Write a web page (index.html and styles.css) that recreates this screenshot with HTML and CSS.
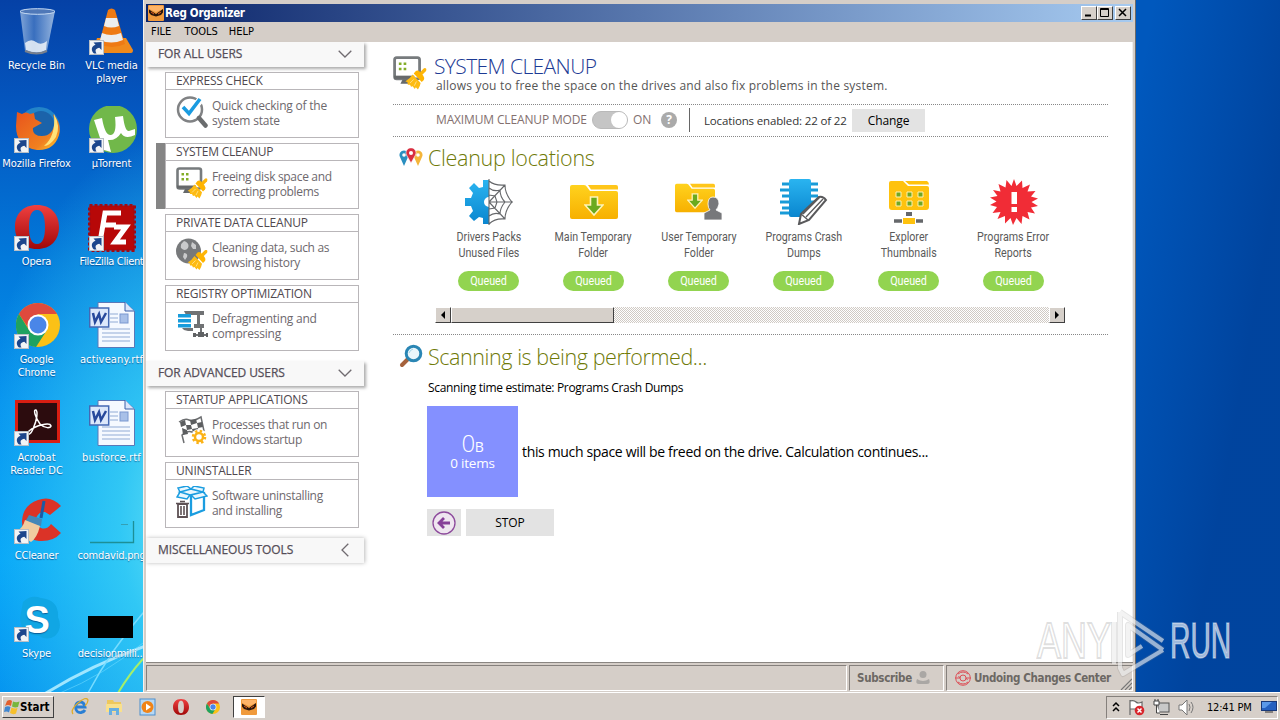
FILE: index.html
```html
<!DOCTYPE html>
<html lang="en">
<head>
<meta charset="utf-8">
<title>Reg Organizer</title>
<link rel="stylesheet" href="styles.css">
</head>
<body>
<svg width="0" height="0" class="defs">
  <defs>
    <linearGradient id="gBlue" x1="0" y1="0" x2="0" y2="1"><stop offset="0" stop-color="#2ab4f0"/><stop offset="1" stop-color="#0a86cf"/></linearGradient>
    <linearGradient id="gFold" x1="0" y1="0" x2="0" y2="1"><stop offset="0" stop-color="#ffd21e"/><stop offset="1" stop-color="#f7b000"/></linearGradient>
    <linearGradient id="gRed" x1="0" y1="0" x2="0" y2="1"><stop offset="0" stop-color="#f04040"/><stop offset="1" stop-color="#a00808"/></linearGradient>
    <linearGradient id="gGlass" x1="0" y1="0" x2="1" y2="0"><stop offset="0" stop-color="#a9c4e6"/><stop offset=".4" stop-color="#4a7cc4"/><stop offset="1" stop-color="#c4d8ee"/></linearGradient>
    <linearGradient id="gFox" x1="0" y1="0" x2="1" y2="1"><stop offset="0" stop-color="#e8541c"/><stop offset=".7" stop-color="#f08020"/><stop offset="1" stop-color="#ffd030"/></linearGradient>
    <symbol id="arrow" viewBox="0 0 15 15"><rect x=".5" y=".5" width="14" height="14" fill="#f2f4f6" stroke="#b9bfc6"/><path d="M5 13.500C2 11 1.800 6.500 6.500 4.800L4.500 2.500 12.500 2V10L10.300 7.800C7 8.500 5.500 10 7.500 13.500Z" fill="#1c468c"/></symbol>
    <symbol id="broom" viewBox="0 0 20 20"><path d="M14 6L18.500 1.500" stroke="#fdb50a" stroke-width="3.200" stroke-linecap="round"/><path d="M10 2.500Q12 1.500 13.500 3L17 7Q18.500 9 17.500 11L15.500 13 8 5Z" fill="#ffb400"/><path d="M7 6L14.500 13.800Q14 17 12 20L10 18 9 19.500 7 17 5.500 17.500 4.500 15.500 2.500 15.500 2 13 0 12.500Q4.500 10 7 6Z" fill="#fdbb13"/><path d="M10.500 12.500L8.500 16.500M8 10.500L4.500 14" stroke="#ffe9a8" stroke-width=".7"/></symbol>
    <symbol id="monitor" viewBox="0 0 32 32"><rect x="1.500" y="1.500" width="23.500" height="20" rx="2" fill="#fff" stroke="#777b7d" stroke-width="2.600"/><path d="M9 22H18L20 26H7Z" fill="#66696b"/><path d="M1 20H20" stroke="#66696b" stroke-width="3"/><path d="M5.500 6H8V8.500H5.500ZM10 6H12.500V8.500H10ZM5.500 11H8V13.500H5.500ZM10 11H12.500V13.500H10Z" fill="#83ad28"/><use href="#broom" x="11.500" y="11" width="20" height="21"/></symbol>
    <symbol id="chev" viewBox="0 0 14 8"><path d="M.7.7L7 7 13.300.7" fill="none" stroke="#706b70" stroke-width="1.300"/></symbol>
    <symbol id="chrome" viewBox="0 0 44 44"><circle cx="22" cy="22" r="22" fill="#fbc116"/><path d="M2.900 11A22 22 0 0 1 41 11L22 11 13 26Z" fill="#de4a3d"/><path d="M2.900 11A22 22 0 0 0 20 44L31 27 13 27Z" fill="#1ea261"/><circle cx="22" cy="22" r="10.500" fill="#fff"/><circle cx="22" cy="22" r="8.500" fill="#4a86e8"/></symbol>
    <symbol id="opera" viewBox="0 0 44 44"><path fill-rule="evenodd" d="M22 0C36 0 44 9 44 22S36 44 22 44 0 35 0 22 8 0 22 0ZM22 5C16 5 14 12 14 22S16 39 22 39 30 32 30 22 28 5 22 5Z" fill="url(#gRed)"/></symbol>
    <symbol id="word" viewBox="0 0 46 46"><path d="M9 .5H36L45.500 9V45.500H9Z" fill="#f5f9ff" stroke="#5a78b8"/><path d="M36 0V9H45" fill="#dbe6fa" stroke="#3b5ea8"/><path d="M21 12H29M21 16H29M21 20H29M13 27H41M13 31H41M13 35H41M13 39H41" stroke="#92abd6" stroke-width="1.200"/><rect x="31" y="12" width="8" height="9" fill="#a8c0e8" stroke="#7a98d0"/><rect x=".7" y="6" width="19" height="19" fill="#dce8fb" stroke="#4468b4" stroke-width="1.500"/><path d="M4 11L6 20 10 12 12 20 17 11" fill="none" stroke="#27499c" stroke-width="2.500"/></symbol>
    <symbol id="reg" viewBox="0 0 16 16"><rect width="16" height="16" rx="1" fill="#f09a3c"/><path d="M1 1H15V4L8 7 1 4Z" fill="#ffb468"/><path d="M1 4.500L8 9 15 4V7.500L13 10 8 11.500 3 10 1 7.500Z" fill="#2a160c"/><path d="M3 7L6 9M10 9L13 7" stroke="#e25a1c"/></symbol>
    <symbol id="folder" viewBox="0 0 48 36"><path d="M2 1H14Q16 1 17 3L20 7H46Q48 7 48 9V33Q48 35 46 35H2Q0 35 0 33V3Q0 1 2 1Z" fill="url(#gFold)"/><path d="M18 1H46Q48 1 48 3V5.500H21Z" fill="#ffc61a"/></symbol>
    <symbol id="down" viewBox="0 0 20 20"><path d="M6.500 1H13.500V9H19L10 19 1 9H6.500Z" fill="#6aaa1e" stroke="#fff3b8" stroke-width="1.600"/></symbol>
  </defs>
</svg>
<div class="desktop">
  <svg class="beams" viewBox="0 0 143 120" width="143" height="120">
    <g fill="none" stroke-linecap="round"><path d="M46 120Q92 92 143 74" stroke="#9fe6ff" stroke-width="3"/><path d="M88 120Q112 75 143 40" stroke="#77dcff" stroke-width="1.500"/><path d="M118 120Q130 100 143 86" stroke="#a4ef6a" stroke-width="2"/><path d="M60 120Q104 102 143 70" stroke="#6ddaff" stroke-width="1" opacity=".6"/></g>
  </svg>
  <div class="icons">
    <div class="dicon"><svg width="48" height="48" viewBox="0 0 48 48"><path d="M7 3L12 43Q25 48 34 43L42 3Z" fill="url(#gGlass)" opacity=".75"/><ellipse cx="24.500" cy="3.500" rx="17.500" ry="2.800" fill="#4f78b8" stroke="#c8dcf4"/><path d="M12 35Q18 30 23 34T34 33L33 42Q24 47 13 42Z" fill="#eef3f8" opacity=".85"/><path d="M12 43Q24 48 34 43" stroke="#777f8c" stroke-width="2" fill="none"/></svg><span class="n0">Recycle Bin</span></div>
    <div class="dicon"><svg width="48" height="48" viewBox="0 0 48 48"><path d="M9 30H38L45 42Q45 45 43 45H7Q5 45 5 43Z" fill="#f08a1c"/><path d="M20 2Q23.500-1 27 2L37 36Q24 42 11 36Z" fill="#ee7a14"/><path d="M18 10H29L31 18Q23 21 16 18ZM14 25Q23 29 33 25L35 32Q23 37 12 32Z" fill="#eceef0"/><use href="#arrow" x="1" y="32" width="15" height="15"/></svg><span class="n1">VLC media<br>player</span></div>
    <div class="dicon"><svg width="48" height="48" viewBox="0 0 48 48"><circle cx="26" cy="22" r="21" fill="#2384c8"/><circle cx="28" cy="18" r="13" fill="#1b63aa"/><path d="M4 6L9 8Q13 5 17 8L21 7 22 13 29 17 20 22Q19 30 29 30 40 30 42 16L40 8Q49 18 46 29 41 45 24 44 3 41 3 20Z" fill="url(#gFox)"/><path d="M41 8Q48 20 43 31 37 40 31 40 43 30 41 8Z" fill="#ffe37a"/><use href="#arrow" x="1" y="32" width="15" height="15"/></svg><span class="n1">Mozilla Firefox</span></div>
    <div class="dicon"><svg width="50" height="48" viewBox="0 0 50 48"><circle cx="26" cy="23" r="24" fill="#71b84a"/><path d="M7 14L15 12Q18 30 24 29 30 28 28 11L36 10Q38 26 42 25L48 23V29Q38 34 34 27 29 35 21 34L24 46 17 44Z" fill="#fff"/><use href="#arrow" x="2" y="32" width="15" height="15"/></svg><span class="n1">µTorrent</span></div>
    <div class="dicon"><svg width="48" height="48" viewBox="0 0 48 48"><use href="#opera" x="2" y="0" width="44" height="46"/><use href="#arrow" x="1" y="32" width="15" height="15"/></svg><span>Opera</span></div>
    <div class="dicon"><svg width="48" height="48" viewBox="0 0 48 48"><rect x="1.500" y="1.500" width="45" height="45" fill="#b70808" stroke="#a30a12" stroke-width="3" stroke-dasharray="3 2"/><path d="M12 38L17 9H33M15 21H28M26 23H38L27 38H38" fill="none" stroke="#fff" stroke-width="5"/><use href="#arrow" x="1" y="32" width="15" height="15"/></svg><span class="n2">FileZilla Client</span></div>
    <div class="dicon"><svg width="48" height="48" viewBox="0 0 48 48"><use href="#chrome" x="3" y="1" width="44" height="44"/><use href="#arrow" x="1" y="32" width="15" height="15"/></svg><span>Google<br>Chrome</span></div>
    <div class="dicon"><svg width="48" height="48" viewBox="0 0 48 48"><use href="#word" x="1" y="0" width="46" height="46"/></svg><span class="wide">activeany.rtf</span></div>
    <div class="dicon"><svg width="48" height="48" viewBox="0 0 48 48"><rect x="3.500" y="1.500" width="42" height="40" fill="#2c0c0e" stroke="#d81e12" stroke-width="3"/><path d="M23 10C20 9 22 17 27 24 32 29 38 28 38 26 37 22 23 25 16 31 12 36 17 36 20 29 24 20 25 12 23 10Z" fill="none" stroke="#fff" stroke-width="1.500"/><use href="#arrow" x="1" y="31" width="15" height="15"/></svg><span class="n0">Acrobat<br>Reader DC</span></div>
    <div class="dicon"><svg width="48" height="48" viewBox="0 0 48 48"><use href="#word" x="1" y="0" width="46" height="46"/></svg><span class="wide">busforce.rtf</span></div>
    <div class="dicon"><svg width="48" height="48" viewBox="0 0 48 48"><path d="M48 8Q38-3 25 2 10 7 9 23 9 41 26 43 40 44 48 35L38 26Q34 32 28 30 22 27 23 20 26 13 32 14L37 17Z" fill="#db3327"/><path d="M31 3L28 20" stroke="#1c5aa4" stroke-width="3"/><path d="M16 17L29 21 28 28 12 24Z" fill="#4488b8"/><path d="M12 22L27 28Q24 40 18 44L3 34Q10 30 12 22Z" fill="#f0cda0"/><use href="#arrow" x="1" y="31" width="15" height="15"/></svg><span>CCleaner</span></div>
    <div class="dicon"><svg width="48" height="48" viewBox="0 0 48 48"><path d="M2 44.500H45.500V23" fill="none" stroke="#1d8f96" stroke-width="1.300"/><path d="M33 26.500H40" stroke="#35a0b4"/></svg><span>comdavid.png</span></div>
    <div class="dicon"><svg width="48" height="48" viewBox="0 0 48 48"><path d="M10 6Q18-2 28 2 46 4 45 21 50 32 42 40 34 45 26 40 8 39 7 22Z" fill="#10a6e4"/><text x="24" y="37" class="skype">S</text><use href="#arrow" x="1" y="31" width="15" height="15"/></svg><span>Skype</span></div>
    <div class="dicon"><svg width="48" height="48" viewBox="0 0 48 48"><rect x="0" y="20" width="45" height="22"/></svg><span>decisionmilli...</span></div>
  </div>

  <section class="window">
    <header class="titlebar"><svg width="16" height="16"><use href="#reg"/></svg><b>Reg Organizer</b>
      <div class="winbtns"><i><svg width="14" height="12"><path d="M3 8.500H9" stroke="#000" stroke-width="2"/></svg></i><i><svg width="14" height="12"><path d="M2.500 1.500H10.500V9.500H2.500ZM2.500 2.500H10.500" fill="none" stroke="#000"/></svg></i><i class="cls"><svg width="14" height="12"><path d="M3 2L10 9M10 2L3 9" stroke="#000" stroke-width="1.500"/></svg></i></div>
    </header>
    <nav class="menu"><span>FILE</span><span>TOOLS</span><span>HELP</span></nav>
    <div class="body">
      <aside class="side">
        <h3>FOR ALL USERS<svg width="14" height="8"><use href="#chev"/></svg></h3>
        <div class="cards">
          <article><h4>EXPRESS CHECK</h4><div><svg width="32" height="32" viewBox="0 0 32 32"><circle cx="14" cy="13.500" r="12" fill="#fff" stroke="#808284" stroke-width="2.500"/><path d="M23 22L29.500 29.500" stroke="#6a6c6e" stroke-width="4.500" stroke-linecap="round"/><path d="M7 12L13 18 25 3" fill="none" stroke="#fff" stroke-width="7"/><path d="M7 11L13 17.500 24 3" fill="none" stroke="#1a9be0" stroke-width="3.600"/></svg><p class="p1">Quick checking of the<br>system state</p></div></article>
          <article class="on"><h4>SYSTEM CLEANUP</h4><div><svg width="32" height="32"><use href="#monitor"/></svg><p>Freeing disk space and<br>correcting problems</p></div></article>
          <article><h4>PRIVATE DATA CLEANUP</h4><div><svg width="32" height="32" viewBox="0 0 32 32"><circle cx="12.500" cy="13" r="12.500" fill="#77797b"/><path d="M8 3Q14 5 12 10 9 14 5 10 4 6 8 3ZM16 4L20 7 20 11 17 11 15 8ZM8 15Q12 15 11 19L9 22 7 19Z" fill="#c9cacb"/><use href="#broom" x="11.500" y="12" width="20" height="20"/></svg><p>Cleaning data, such as<br>browsing history</p></div></article>
          <article><h4>REGISTRY OPTIMIZATION</h4><div><svg width="32" height="32" viewBox="0 0 32 32"><path d="M8 2H28V6H24V15H28V19H18V15H21V6H10ZM6 19H17V22H12L8 21Z" fill="#707274"/><path d="M2 5H15V8.500H2ZM2 10H15V13.500H2ZM2 15H15V18.500H2Z" fill="#189cdc"/><path d="M18 26H30M25 19V25" stroke="#707274" stroke-width="2"/><path d="M22 23H28V28H22ZM17 24H20V28H17ZM30 24H32V28H30Z" fill="#606264"/></svg><p class="p1">Defragmenting and<br>compressing</p></div></article>
        </div>
        <h3 class="adv">FOR ADVANCED USERS<svg width="14" height="8"><use href="#chev"/></svg></h3>
        <div class="cards">
          <article><h4>STARTUP APPLICATIONS</h4><div><svg width="32" height="32" viewBox="0 0 32 32"><path d="M3 7Q9 3 13 5T25 2L28 16Q20 19 16 17T6 20L8 28" fill="#fff" stroke="#6c6e70" stroke-width="1.500"/><path d="M4 7L9 5 10 10 5 12ZM14 5L20 4 21 8 15 10ZM10 10L15 10 16 14 11 15ZM21 8L26 7 27 12 22 13ZM6 13L11 15 12 19 7 20ZM16 14L22 13 23 17 17 18Z" fill="#5c5e60"/><circle cx="23" cy="22" r="8" fill="#fff"/><circle cx="23" cy="22" r="4" fill="#fff" stroke="#fbb216" stroke-width="2.500"/><circle cx="23" cy="22" r="6" fill="none" stroke="#fbb216" stroke-width="2.500" stroke-dasharray="2.356 2.356"/></svg><p>Processes that run on<br>Windows startup</p></div></article>
          <article><h4>UNINSTALLER</h4><div><svg width="32" height="32" viewBox="0 0 32 32"><path d="M4 6L14 9 28 7V24L15 29V10" fill="none" stroke="#1b9de0" stroke-width="2.300"/><path d="M4 6L14 9 27 6 15 3ZM4 6L1 11 11 13 14 9ZM27 6L31 10 19 13 15 9ZM4 6L2 2 11 0 15 3ZM27 6L28 2 18 0 15 3Z" fill="#e9f7fe" stroke="#1b9de0" stroke-width="1.500"/><path d="M2 18H11V31H2Z" fill="#fff" stroke="#5d5154" stroke-width="1.800"/><path d="M0 17.500H13M4 15.500H9M5 20V29M8 20V29" stroke="#5d5154" stroke-width="1.600"/></svg><p>Software uninstalling<br>and installing</p></div></article>
        </div>
        <h3 class="misc">MISCELLANEOUS TOOLS<svg class="left" width="14" height="8"><use href="#chev"/></svg></h3>
      </aside>
      <main>
        <div class="head"><svg width="34" height="34"><use href="#monitor"/></svg><div><h1>SYSTEM CLEANUP</h1><p>allows you to free the space on the drives and also fix problems in the system.</p></div></div>
        <div class="mode"><span class="mx">MAXIMUM CLEANUP MODE</span><span class="toggle"></span><span class="ont">ON</span><span class="q">?</span><span class="loc">Locations enabled: 22 of 22</span><span class="btn change">Change</span></div>
        <section class="locs">
          <h2><svg width="24" height="20" viewBox="0 0 24 20"><path d="M5 18L1 9A4.500 4.500 0 1 1 9 9Z" fill="#2a8fc0"/><path d="M19 18L15 9A4.500 4.500 0 1 1 23 9Z" fill="#f4b53a"/><path d="M12 15L7.500 7A5 5 0 1 1 16.500 7Z" fill="#d92e40" stroke="#fff" stroke-width=".6"/><circle cx="5" cy="7" r="1.800" fill="#fff"/><circle cx="12" cy="5" r="2" fill="#fff"/><circle cx="19" cy="7" r="1.800" fill="#fff"/></svg>Cleanup locations</h2>
          <div class="tiles">
            <div><svg width="48" height="46" viewBox="0 0 48 46"><path d="M24 1H18V8L14 9 9 4 4 9 8 14 6 19H0V27H6L8 32 4 37 9 42 14 38 18 39V45H24V28A5 5 0 0 1 24 18Z" fill="url(#gBlue)"/><g fill="none" stroke="#65676a" stroke-width="1.100"><path d="M24 0V46M24 23H48M24 23L40 6M24 23L40 40M24 2Q30 7 40 6 40 15 47 23 40 31 40 40 30 39 24 45M24 9Q29 13 35 11 35 18 40 23 35 29 35 35 29 33 24 37M24 16L30 17 32 23 30 29 24 30"/></g></svg><span>Drivers Packs<br>Unused Files</span><em>Queued</em></div>
            <div><svg width="48" height="46" viewBox="0 0 48 46"><use href="#folder" y="5" width="48" height="36"/><use href="#down" x="14" y="17" width="20" height="20"/></svg><span>Main Temporary<br>Folder</span><em>Queued</em></div>
            <div><svg width="48" height="46" viewBox="0 0 48 46"><use href="#folder" y="4" width="40" height="30"/><use href="#down" x="12" y="14" width="16" height="16"/><path d="M38 18Q44 18 44 25 43 29 41 31L47 34V41H29V34L35 31Q33 29 33 25 33 18 38 18Z" fill="#77787b" stroke="#fff" stroke-width=".8"/></svg><span>User Temporary<br>Folder</span><em>Queued</em></div>
            <div><svg width="48" height="46" viewBox="0 0 48 46"><path d="M2 5H38M0 11H38M2 17H38M0 23H38M2 29H38M0 34H25" stroke="#189bd8" stroke-width="3"/><rect x="9" y="0" width="22" height="38" rx="2" fill="url(#gBlue)"/><path d="M21 35L39 18Q43 17 46 21L29 41 19 45Z" fill="#fff" stroke="#59595b" stroke-width="2"/><path d="M26 38L43 20M23 35L40 18M21 35L28 41" stroke="#59595b" stroke-width="1.300"/></svg><span>Programs Crash<br>Dumps</span><em>Queued</em></div>
            <div><svg width="48" height="46" viewBox="0 0 48 46"><path d="M4 4Q4 2 6 2H18L23 7H42Q44 7 44 9V28Q44 31 41 31H7Q4 31 4 28ZM20 2H42Q44 3 44 5.500H24Z" fill="#ffc20e"/><path d="M11 13H16V18H11ZM22 13H27V18H22ZM33 13H38V18H33ZM11 22H16V27H11ZM22 22H27V27H22ZM33 22H38V27H33Z" fill="#6fa724" stroke="#fff2b0"/><path d="M21 35H27" stroke="#66686b" stroke-width="4"/><path d="M9 42H17M31 42H38" stroke="#66686b" stroke-width="3.500"/><path d="M18 39H30V45H18Z" fill="#ffc20e"/></svg><span>Explorer<br>Thumbnails</span><em>Queued</em></div>
            <div><svg width="48" height="46" viewBox="0 0 48 46"><path d="M24 0L26.500 7 32 1.500 32.500 9 40 5.500 37.500 12.500 45.500 12 41 17.500 48 19.500 41.500 23 48 27 41 28.500 45 34.500 37.500 33 39.500 40.500 32.500 37 31.500 45 26.500 39 23 46 20.500 39 15 44.500 15 37 7.500 40 10.500 33 2.500 34 7 28 0 26 6.500 22.500 0 18.500 7.500 17 3 11 10.500 12.500 8.500 5 15.500 8.500 16.500 1 21.500 7Z" fill="#f12c36"/><path d="M21.500 13H27V25H21.500ZM21.500 28H27V33H21.500Z" fill="#fff"/></svg><span>Programs Error<br>Reports</span><em>Queued</em></div>
          </div>
          <div class="scroll"><i><svg width="14" height="14"><path d="M9 3V11L5 7Z"/></svg></i><b></b><i class="r"><svg width="14" height="14"><path d="M5 3V11L9 7Z"/></svg></i></div>
        </section>
        <section class="scan">
          <h2 class="h2s"><svg width="24" height="26" viewBox="0 0 24 26"><path d="M9 15L3 21" stroke="#a5623c" stroke-width="4" stroke-linecap="round"/><circle cx="14.500" cy="9.500" r="7.300" fill="#eaf6fb" stroke="#2a86b4" stroke-width="3"/><path d="M10 9Q11 6 14 5" fill="none" stroke="#9fd2e8"/></svg>Scanning is being performed...</h2>
          <p class="est">Scanning time estimate: Programs Crash Dumps</p>
          <div class="res"><div class="box"><div><span class="zero">0</span><span class="unit">B</span></div><span class="itm">0 items</span></div><p>this much space will be freed on the drive. Calculation continues...</p></div>
          <div class="acts"><span class="btn back"><svg width="24" height="24" viewBox="0 0 24 24"><circle cx="12" cy="12" r="11" fill="#efe6f0" stroke="#8d4a9c" stroke-width="1.300"/><path d="M18 12H8M12 7L7 12 12 17" fill="none" stroke="#863f98" stroke-width="2.800"/></svg></span><span class="btn stop">STOP</span></div>
        </section>
      </main>
    </div>
    <footer class="status"><div></div><div class="sub">Subscribe<svg width="14" height="16" viewBox="0 0 14 16"><circle cx="7" cy="4.500" r="3.500" fill="#aaa7a4"/><path d="M1 9Q7 13 13 9 15 14 11 14H3Q-1 14 1 9Z" fill="#aaa7a4"/></svg></div><div class="undo"><svg width="16" height="16" viewBox="0 0 16 16"><g fill="none" stroke="#dc5058"><circle cx="8" cy="8" r="7.300"/><circle cx="8" cy="8" r="3"/><path d="M0 8H5L3.500 6M16 8H11L12.500 10M3 4Q8 0 13 4M3 12Q8 16 13 12"/></g></svg>Undoing Changes Center<svg class="grip" width="12" height="12" viewBox="0 0 12 12"><path d="M1 12L12 1M5 12L12 5M9 12L12 9" stroke="#777" stroke-width="1.200"/></svg></div></footer>
  </section>

  <div class="mark">
    <span class="any">ANY</span>
    <svg width="60" height="72" viewBox="0 0 60 72"><g fill="none" stroke-linejoin="round"><path d="M4 14V56M10 4V60L13 66 53 42M10 4L53 33M53 42L18 17V47L32 38" stroke="#888" stroke-opacity=".22" stroke-width="6"/><path d="M4 14V56M10 4V60L13 66 53 42M10 4L53 33M53 42L18 17V47L32 38" stroke="#fff" stroke-opacity=".55" stroke-width="4"/></g></svg>
    <span class="run">RUN</span>
  </div>

  <footer class="taskbar">
    <div class="start"><svg width="16" height="16" viewBox="0 0 16 16"><path d="M3 2Q6 0 8 2L7 7Q4 5 1 7Z" fill="#e3602e"/><path d="M9 2.500Q12 4 15.500 2.500L14 8Q11 9 8 7.500Z" fill="#77b63e"/><path d="M1 8Q4 6.500 6.500 8L5 13.500Q3 12 0 13Z" fill="#4187d0"/><path d="M7.500 8.500Q11 10 13.500 9L12 14.500Q9 16 6 14Z" fill="#f6c02c"/></svg>Start</div>
    <div class="quick">
      <svg width="18" height="18" viewBox="0 0 18 18"><path d="M5 9H14Q13 4 9.500 4 5 4 4.500 9 5 15 10 14.500 13 14 14 12" fill="none" stroke="#2a7fd4" stroke-width="2.800"/><path d="M2 16Q-1 12 7 5T17 2Q17 5 14 8" fill="none" stroke="#e0ac28" stroke-width="1.300"/></svg>
      <svg width="18" height="18" viewBox="0 0 18 18"><path d="M2 2H8L9 4H16V14H2Z" fill="#eec85c"/><path d="M1 6H17V14H1Z" fill="#f9e08c"/><path d="M4 17V10H14V17H11V13H7V17Z" fill="#68aee0"/></svg>
      <svg width="18" height="18" viewBox="0 0 18 18"><rect x="1" y="1" width="15" height="16" fill="#b7d8f4" stroke="#4c8fce"/><circle cx="8.500" cy="9" r="6" fill="#f08418"/><path d="M7 5.500V12.500L12 9Z" fill="#fff"/></svg>
      <svg width="16" height="18" viewBox="0 0 16 18"><use href="#opera" y="1" width="16" height="16"/></svg>
      <svg width="15" height="18" viewBox="0 0 15 18"><use href="#chrome" x="1" y="2" width="14" height="14"/></svg>
    </div>
    <div class="active"><svg width="16" height="16"><use href="#reg"/></svg></div>
    <div class="tray">
      <svg width="8" height="12" viewBox="0 0 8 12"><path d="M1 5L4 2 7 5M1 10L4 7 7 10" fill="none" stroke="#000" stroke-width="1.500"/></svg>
      <svg width="17" height="17" viewBox="0 0 17 17"><path d="M2 1V16M2 2Q6 1 8 3T14 3V10H2" fill="#fff" stroke="#666" stroke-width="1.200"/><circle cx="11.500" cy="11.500" r="4.800" fill="#d8262c"/><path d="M9.500 9.500L13.500 13.500M13.500 9.500L9.500 13.500" stroke="#fff" stroke-width="1.500"/></svg>
      <svg width="17" height="17" viewBox="0 0 17 17"><rect x="5" y="4" width="11" height="9" fill="#c8c8c8" stroke="#555"/><path d="M7 15.500H15" stroke="#444"/><path d="M1 2H6V6H1ZM3.500 6V14H7M2 0V2M5 0V2" fill="#fff" stroke="#444"/></svg>
      <svg width="18" height="17" viewBox="0 0 18 17"><path d="M1 6H4L9 1V16L4 11H1Z" fill="#fff" stroke="#777"/><path d="M11 5Q13 8 11 12M13 3Q17 8 13 14" fill="none" stroke="#777"/></svg>
      <span>12:41 PM</span>
      <svg width="16" height="14" viewBox="0 0 16 14"><rect x=".5" y="1.500" width="15" height="9" fill="#2460c0" stroke="#183878"/><path d="M1 2H11L4 8H1Z" fill="#5a98e8"/><path d="M4 12H12" stroke="#333"/></svg>
    </div>
  </footer>
</div>
</body>
</html>
```

FILE: styles.css
```css
* { box-sizing: border-box; }
body { margin: 0; width: 1280px; height: 720px; overflow: hidden; font-family: "DejaVu Sans Condensed", "DejaVu Sans", sans-serif; font-size: 11px; font-stretch: condensed; color: #000; }
h1, h2, h3, h4, p { margin: 0; font-weight: 400; }
svg { flex: none; display: block; }
.defs { position: absolute; }
.desktop { position: relative; width: 1280px; height: 720px; overflow: hidden; background:
  linear-gradient(100deg, transparent 1136px, rgba(0,30,100,.35) 1290px),
  linear-gradient(90deg, transparent 0 1130px, #0058bd 1130px),
  radial-gradient(ellipse 230px 400px at 200px 520px, #6ee4f4 0, rgba(60,210,245,.8) 35%, rgba(20,170,245,0) 100%),
  linear-gradient(180deg, #0541a6 0, #0459c2 120px, #0279da 260px, #0490ee 400px, #02a2f8 560px, #0490ee 720px); }
.beams { position: absolute; left: 0; top: 573px; }
.icons { position: absolute; left: -1px; top: 8px; display: grid; grid-template-columns: 75px 75px; grid-auto-rows: 98px; }
.dicon { display: flex; flex-direction: column; align-items: center; gap: 3px; color: #fff; text-align: center; line-height: 13px; white-space: nowrap; text-shadow: 0 1px 1px rgba(0,20,80,.5); letter-spacing: -.2px; }
.n0 { letter-spacing: 0; }
.n1 { letter-spacing: -.1px; }
.n2 { letter-spacing: -.35px; }
.wide { letter-spacing: .15px; }
.skype { font: bold 38px "Liberation Sans", sans-serif; fill: #fff; text-anchor: middle; }

.window { position: absolute; left: 143px; top: 0; width: 993px; height: 692px; padding: 4px 2px 0; background: #d5cec8; border-left: 1px solid #f4f1ee; border-right: 1px solid #6c6a68; display: flex; flex-direction: column; }
.titlebar { height: 18px; flex: none; display: flex; align-items: center; gap: 1px; padding: 0 2px; background: linear-gradient(90deg, #0a246a, #a6caf0); color: #fff; }
.titlebar b { font-size: 11.5px; letter-spacing: -.28px; }
.winbtns { margin-left: auto; display: flex; }
.winbtns i { width: 16px; height: 14px; background: #d6d0ca; border: 1px solid; border-color: #fff #404040 #404040 #fff; }
.winbtns .cls { margin-left: 2px; }
.menu { height: 20px; flex: none; display: flex; gap: 13px; padding: 0 5px; line-height: 20px; font-size: 11px; }
.menu span:last-child { margin-left: -2px; }
.body { flex: none; height: 620px; display: flex; background: #fff; border-right: 1px solid #eee; }

.side { width: 219px; font-family: "Open Sans", "Noto Sans", sans-serif; font-stretch: normal; }
.side h3 { width: 218px; height: 25px; padding: 0 12px 2px; display: flex; align-items: center; justify-content: space-between; background: #f8f8f8; color: #554e58; font-size: 12px; -webkit-text-stroke: .25px #554e58; letter-spacing: -.08px; box-shadow: 2px 2px 3px #aaa; }
.side .adv { margin-top: 10px; }
.side .misc { margin-top: 10px; box-shadow: 1px 0 4px #bbb; }
.left { transform: rotate(90deg); }
.cards { padding: 5px 6px 0 19px; display: flex; flex-direction: column; gap: 5px; }
.cards article { height: 66px; border: 1px solid #b9b6b9; color: #6d686d; font-size: 12px; }
.cards .on { box-shadow: -9px 0 0 #858585; }
.cards h4 { height: 17px; line-height: 16px; padding-left: 10px; border-bottom: 1px solid #b9b6b9; font-size: 12px; color: #4f484e; letter-spacing: -.2px; }
.cards article div { display: flex; gap: 4px; padding: 6px 0 0 10px; }
.cards p { line-height: 15px; white-space: nowrap; padding-top: 2px; letter-spacing: -.32px; }
.cards .p1 { letter-spacing: -.22px; }

main { flex: 1; padding: 0 24px 0 28px; font-family: "Open Sans", "Noto Sans", sans-serif; font-stretch: normal; }
.head { height: 63px; padding-top: 14px; border-bottom: 1px dotted #888; display: flex; gap: 7px; }
h1 { font-size: 21px; font-weight: 300; line-height: 21px; letter-spacing: -.6px; color: #1c3a94; white-space: nowrap; }
.head p { padding-left: 2px; font-size: 12px; line-height: 17px; letter-spacing: .2px; color: #555; white-space: nowrap; }
.mode { height: 32px; border-bottom: 1px dotted #888; display: flex; align-items: center; padding: 0 0 1px 43px; font-size: 12px; white-space: nowrap; color: #83706f; }
.mx, .ont { margin-top: -2px; }
.mx { width: 156px; letter-spacing: -.15px; }
.toggle { width: 36px; height: 18px; border-radius: 9px; background: #c5c5c5; border: 1px solid #b9b9b9; }
.toggle::after { content: ""; display: block; width: 16px; height: 16px; margin-left: 18px; border-radius: 50%; background: #fff; }
.ont { width: 28px; margin-left: 5px; }
.q { width: 16px; height: 16px; border-radius: 50%; background: #aaa; color: #fff; font-weight: 700; text-align: center; line-height: 16px; }
.loc { margin-left: 12px; padding-left: 14px; height: 24px; line-height: 25px; width: 163px; border-left: 1px solid #666; font-size: 11.5px; letter-spacing: -.15px; color: #333; }
.btn { background: #e3e3e3; color: #000; display: flex; align-items: center; justify-content: center; font-size: 12px; letter-spacing: -.1px; }
.change { width: 73px; height: 23px; margin-top: 1px; }
h2 { display: flex; align-items: center; gap: 5px; padding-left: 6px; font-size: 21.500px; font-weight: 300; line-height: 30px; letter-spacing: -.3px; color: #6f7a08; white-space: nowrap; }
.h2s { letter-spacing: -.43px; }
.locs { height: 198px; padding-top: 6px; border-bottom: 1px dotted #888; }
.tiles { display: grid; grid-template-columns: repeat(6, 105px); margin-left: 43px; padding-top: 6px; }
.tiles div { display: flex; flex-direction: column; align-items: center; font-family: Roboto, "Liberation Sans", sans-serif; font-size: 12.5px; line-height: 16px; text-align: center; color: #5a5a5a; white-space: nowrap; }
.tiles span { margin-top: 4px; transform: scaleX(.855); }
.tiles em { font-style: normal; color: #fff; background: #92d450; width: 71px; height: 20px; line-height: 19px; border-radius: 12px / 10px; margin-top: 10px; transform: scaleX(.86); }
.scroll { margin: 16px 0 0 42px; width: 630px; height: 16px; display: flex; background: repeating-conic-gradient(#fff 0 25%, #d0cac4 0 50%) 0 0 / 2px 2px; }
.scroll i { width: 16px; }
.scroll i, .scroll b { background: #d6d0ca; border: 1px solid; border-color: #fff #404040 #404040 #fff; }
.scroll b { width: 163px; }
.scroll .r { margin-left: auto; }
.scan { padding-top: 7px; }
.est { margin: 8px 0 0 35px; font-size: 12px; line-height: 16px; letter-spacing: -.33px; white-space: nowrap; }
.res { display: flex; align-items: center; gap: 4px; margin: 10px 0 0 34px; height: 91px; font-size: 14px; letter-spacing: -.34px; white-space: nowrap; }
.box { width: 91px; height: 91px; background: #8490ff; color: #fff; text-align: center; padding-top: 25px; line-height: 24px; }
.box div { height: 24px; }
.zero { font-size: 24px; font-weight: 300; }
.unit { font-size: 14px; }
.itm { display: block; line-height: 16px; font-size: 13.500px; letter-spacing: -.2px; }
.acts { display: flex; gap: 5px; margin: 12px 0 0 34px; }
.acts .btn { height: 27px; }
.back { width: 34px; }
.stop { width: 88px; }

.status { height: 30px; flex: none; padding: 2px 0; display: flex; gap: 2px; border-top: 1px solid #8a8682; font-weight: 700; font-size: 11.5px; color: #6c6864; }
.status > div { flex: 1; border: 1px solid; border-color: #85807c #fff #fff #85807c; height: 26px; display: flex; align-items: center; white-space: nowrap; }
.status .sub { flex: 0 0 95px; padding-left: 7px; gap: 4px; letter-spacing: -.3px; }
.status .undo { flex: 0 0 187px; padding-left: 8px; gap: 3px; letter-spacing: -.36px; }
.grip { align-self: flex-end; margin-left: auto; }

.mark { position: absolute; left: 1037px; top: 608px; display: flex; font: 50px/66px "Liberation Sans", sans-serif; color: rgba(255,255,255,.65); }
.mark span { display: block; transform-origin: 0 50%; -webkit-text-stroke: 1.5px rgba(255,255,255,.4); }
.mark .any { width: 73px; transform: scaleX(.72); color: rgba(255,255,255,.9); -webkit-text-stroke: 2px rgba(130,130,130,.25); }
.mark .run { width: 110px; margin-right: -60px; transform: scaleX(.565); }

.taskbar { position: absolute; left: 0; top: 692px; width: 1280px; height: 28px; background: #d6cfc9; border-top: 1px solid #fff; display: flex; align-items: center; padding: 1px 2px 0; }
.start { width: 52px; height: 22px; display: flex; align-items: center; padding-left: 1px; font-weight: 700; font-size: 11.5px; border: 1px solid; border-color: #fff #404040 #404040 #fff; }
.quick { display: flex; gap: 16px; margin-left: 17px; width: 162px; }
.active { width: 32px; height: 22px; background: #fff; border: 1px solid; border-color: #404040 #fff #fff #404040; display: flex; align-items: center; justify-content: center; }
.tray { margin-left: auto; width: 172px; height: 23px; border: 1px solid; border-color: #85807c #fff #fff #85807c; display: flex; align-items: center; gap: 8px; padding: 0 0 0 5px; white-space: nowrap; }
.tray span { margin-left: 3px; width: 47px; letter-spacing: -.2px; }
```
